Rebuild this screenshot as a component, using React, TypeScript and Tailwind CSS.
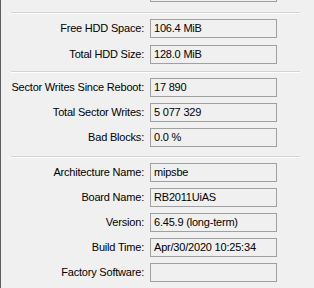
import React from 'react';

type Row = { label: string; value: string };

const groups: { sepTop: string; gap: string; rows: Row[] }[] = [
    {
        sepTop: 'mt-[10px]',
        gap: 'gap-[7px]',
        rows: [
            { label: 'Free HDD Space:', value: '106.4 MiB' },
            { label: 'Total HDD Size:', value: '128.0 MiB' },
        ],
    },
    {
        sepTop: 'mt-[7px]',
        gap: 'gap-[6px]',
        rows: [
            { label: 'Sector Writes Since Reboot:', value: '17 890' },
            { label: 'Total Sector Writes:', value: '5 077 329' },
            { label: 'Bad Blocks:', value: '0.0 %' },
        ],
    },
    {
        sepTop: 'mt-[9px]',
        gap: 'gap-[6px]',
        rows: [
            { label: 'Architecture Name:', value: 'mipsbe' },
            { label: 'Board Name:', value: 'RB2011UiAS' },
            { label: 'Version:', value: '6.45.9 (long-term)' },
            { label: 'Build Time:', value: 'Apr/30/2020 10:25:34' },
            { label: 'Factory Software:', value: '' },
        ],
    },
];

function Field({ value }: { value: string }) {
    return (
        <div className="w-[127px] h-[19px] border border-[#a0a0a0] bg-[#f0f0f0] pl-[3px] flex items-center leading-none whitespace-nowrap overflow-hidden">
            {value}
        </div>
    );
}

function Separator() {
    return <div className="ml-[10px] mr-[14px] border-t border-[#d4d4d4] border-b border-b-white" />;
}

export default function App() {
    return (
        <div
            className="w-[314px] h-[288px] overflow-hidden bg-[#f0f0f0] border-l border-[#5c5c5c] text-[11px] tracking-[-0.2px] text-black"
            style={{ fontFamily: '"Liberation Sans", Arial, sans-serif' }}
        >
            {/* field cut off at the top */}
            <div className="ml-[149px] -mt-[17px]">
                <Field value="" />
            </div>

            {groups.map((g, gi) => (
                <div key={gi}>
                    <div className={g.sepTop}>
                        <Separator />
                    </div>
                    <div className={`mt-[5px] flex flex-col ${g.gap}`}>
                        {g.rows.map((r) => (
                            <div key={r.label} className="flex items-center">
                                <div className="w-[144px] text-right pr-[1px] whitespace-nowrap">{r.label}</div>
                                <div className="ml-[5px]">
                                    <Field value={r.value} />
                                </div>
                            </div>
                        ))}
                    </div>
                </div>
            ))}
        </div>
    );
}
